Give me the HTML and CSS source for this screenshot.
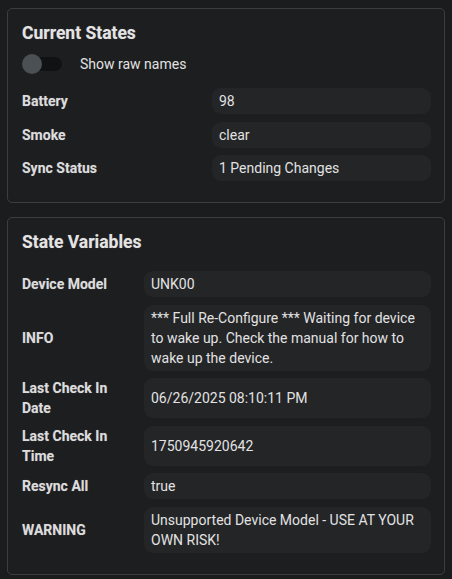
FILE: index.html
```html
<!DOCTYPE html>
<html>
<head>
<meta charset="utf-8">
<link rel="stylesheet" href="styles.css">
</head>
<body>
<section class="card">
  <h2 class="title">Current States</h2>
  <div class="toggle-row">
    <span class="switch"><span class="track"></span><span class="thumb"></span></span>
    <span class="toggle-label">Show raw names</span>
  </div>
  <div class="rows wide">
    <div class="row"><div class="label">Battery</div><div class="value">98</div></div>
    <div class="row"><div class="label">Smoke</div><div class="value">clear</div></div>
    <div class="row"><div class="label">Sync Status</div><div class="value">1 Pending Changes</div></div>
  </div>
</section>
<section class="card">
  <h2 class="title">State Variables</h2>
  <div class="rows narrow">
    <div class="row"><div class="label">Device Model</div><div class="value">UNK00</div></div>
    <div class="row"><div class="label">INFO</div><div class="value">*** Full Re-Configure *** Waiting for device to wake up. Check the manual for how to wake up the device.</div></div>
    <div class="row"><div class="label">Last Check In Date</div><div class="value">06/26/2025 08:10:11 PM</div></div>
    <div class="row"><div class="label">Last Check In Time</div><div class="value">1750945920642</div></div>
    <div class="row"><div class="label">Resync All</div><div class="value">true</div></div>
    <div class="row"><div class="label">WARNING</div><div class="value">Unsupported Device Model - USE AT YOUR OWN RISK!</div></div>
  </div>
</section>
</body>
</html>
```
FILE: styles.css
```css
html, body {
  margin: 0;
  padding: 0;
  background: #1b1c1e;
}
body {
  padding: 8px 7px 0 7px;
  font-family: Roboto, "Liberation Sans", sans-serif;
  color: #e2e2e2;
  font-size: 14px;
}
.card {
  background: #1d1e20;
  border: 1px solid #3c3d3f;
  border-radius: 5px;
  padding: 13px 13px 21px 14px;
  margin-bottom: 14px;
}
.title {
  margin: 0;
  font-size: 17.5px;
  font-weight: 700;
  line-height: 22px;
  color: #e4e4e4;
  text-shadow: 0 0 1px rgba(220,220,220,0.35);
}
.toggle-row {
  display: flex;
  align-items: center;
  height: 22px;
  margin-top: 9px;
  margin-bottom: 13px;
}
.switch {
  position: relative;
  width: 40px;
  height: 22px;
  display: inline-block;
  margin-right: 18px;
}
.track {
  position: absolute;
  left: 0;
  top: 4px;
  width: 40px;
  height: 14px;
  border-radius: 7px;
  background: #111214;
}
.thumb {
  position: absolute;
  left: 0;
  top: 1px;
  width: 20px;
  height: 20px;
  border-radius: 50%;
  background: #4a5053;
}
.toggle-label {
  font-size: 14px;
  color: #e2e2e2;
}
.rows {
  display: flex;
  flex-direction: column;
  gap: 7.5px;
}
.narrow { margin-top: 18px; }
.row {
  display: flex;
  align-items: stretch;
}
.label {
  flex: none;
  display: flex;
  align-items: center;
  font-weight: 700;
  line-height: 20px;
  color: #dcdcdc;
  text-shadow: 0 0 1px rgba(220,220,220,0.35);
}
.wide .label { width: 190px; }
.narrow .label { width: 110px; margin-right: 12px; }
.value {
  flex: 1;
  display: flex;
  align-items: center;
  background: #242527;
  border-radius: 9px;
  padding: 3px 7px;
  line-height: 20px;
  min-height: 20px;
  color: #e2e2e2;
}
```
